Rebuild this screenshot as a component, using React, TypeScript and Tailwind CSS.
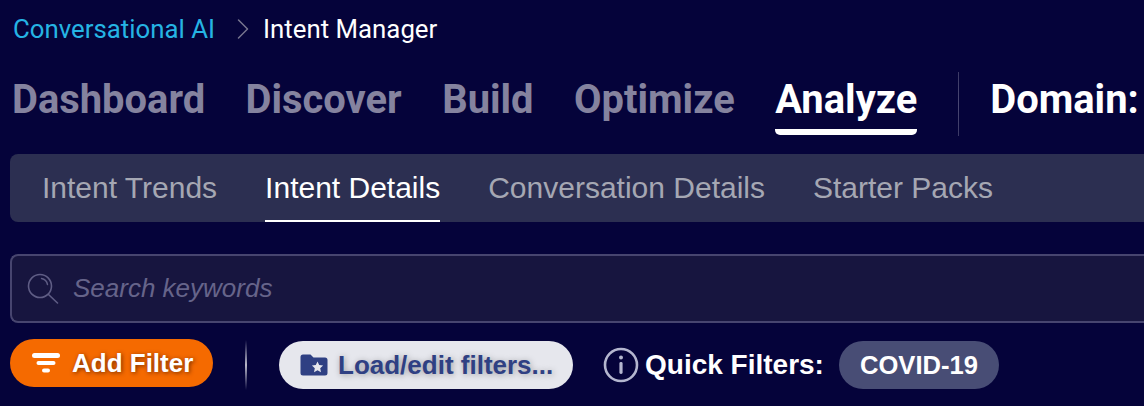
import React from 'react';
import { ChevronRight } from 'lucide-react';

const navItems = ['Dashboard', 'Discover', 'Build', 'Optimize'];
const tabs = ['Intent Trends', 'Intent Details', 'Conversation Details', 'Starter Packs'];

const FilterIcon = () => (
    <svg width="30" height="36" viewBox="0 0 30 36" className="shrink-0">
        <rect x="1" y="8" width="28" height="5" rx="2.5" fill="#fff" />
        <rect x="5.5" y="16" width="19" height="4" rx="2" fill="#fff" />
        <rect x="11" y="23.5" width="8" height="4" rx="2" fill="#fff" />
    </svg>
);

const FolderStarIcon = () => (
    <svg width="28" height="22" viewBox="0 0 28 22" className="shrink-0">
        <path d="M3 0.5h7.5l3 3H25a2.5 2.5 0 0 1 2.5 2.5v13a2.5 2.5 0 0 1-2.5 2.5H3A2.5 2.5 0 0 1 .5 19V3A2.5 2.5 0 0 1 3 .5z" fill="#2f4083" />
        <path d="M17.5 7.5l1.7 3.6 3.9.5-2.9 2.7.8 3.9-3.5-2-3.5 2 .8-3.9-2.9-2.7 3.9-.5z" fill="#e6e7ed" />
    </svg>
);

const SearchIcon = () => (
    <svg width="32" height="32" viewBox="0 0 32 32" fill="none" className="shrink-0 text-[#5f5d85]" stroke="currentColor">
        <circle cx="13" cy="13" r="11.5" strokeWidth="1.6" />
        <path d="M21.5 21.5L30.5 30" strokeWidth="1.6" strokeLinecap="round" />
        <path d="M14.5 5.5a7.5 7.5 0 0 1 6 6" strokeWidth="1.4" strokeLinecap="round" />
    </svg>
);

const InfoIcon = () => (
    <svg width="36" height="36" viewBox="0 0 36 36" fill="none" className="shrink-0">
        <circle cx="18" cy="18" r="16" stroke="#b4b6cf" strokeWidth="2.6" />
        <circle cx="18" cy="10.5" r="2" fill="#b4b6cf" />
        <rect x="16.4" y="15" width="3.2" height="12" rx="1.4" fill="#b4b6cf" />
    </svg>
);

export default function App() {
    return (
        <div className="h-[406px] w-[1144px] overflow-hidden bg-[#05033a] pl-[10px] font-['Liberation_Sans',sans-serif]">
            {/* breadcrumb */}
            <div className="flex h-[60px] items-center pb-[2px] pl-[3px] font-['Roboto',sans-serif] text-[25.8px]">
                <span className="text-[#25b4e4]">Conversational AI</span>
                <ChevronRight size={36} strokeWidth={1} className="ml-[10px] mr-[2px] text-[#77758f]" />
                <span className="text-white">Intent Manager</span>
            </div>

            {/* main nav */}
            <div className="flex h-[74px] items-start pl-[2px] font-['Roboto',sans-serif] text-[39.9px] font-bold whitespace-nowrap">
                <div className="flex gap-[40.5px]">
                    {navItems.map(item => (
                        <span key={item} className="h-[60px] leading-[80px] text-[#85839f]">{item}</span>
                    ))}
                    <span className="relative h-[75px] leading-[80px] text-white">
                        Analyze
                        <span className="absolute bottom-0 left-0 right-0 h-[6px] rounded-b-[5px] bg-white" />
                    </span>
                </div>
                <div className="ml-[41px] mt-[12px] h-[64px] w-px bg-gradient-to-b from-[#3c3a66] via-[#4a4874] to-[#3c3a66]" />
                <span className="ml-[31px] leading-[80px] text-white">Domain:</span>
            </div>

            {/* sub tabs */}
            <div className="mt-[20px] flex h-[68px] gap-[48px] rounded-l-[8px] bg-[#2c2f51] pl-[32px] text-[30px] whitespace-nowrap">
                {tabs.map((tab, i) => (
                    <div
                        key={tab}
                        className={i === 1
                            ? 'flex h-full items-center border-b-2 border-white text-white'
                            : 'flex h-full items-center pb-[2px] text-[#a5a7b3]'}
                    >
                        {tab}
                    </div>
                ))}
            </div>

            {/* search */}
            <div className="mt-[32px] flex h-[69px] items-center gap-[14px] rounded-l-[8px] border-2 border-r-0 border-[#47456f] bg-[#17153f] pl-[15px]">
                <SearchIcon />
                <span className="text-[26px] text-[#66648a] italic">Search keywords</span>
            </div>

            {/* filter row */}
            <div className="mt-[16px] flex items-start text-[26px] font-bold whitespace-nowrap">
                <button className="flex h-[48px] w-[203px] items-center gap-[11px] rounded-full bg-[#f56a00] pl-[21px] text-white [text-shadow:1px_1px_4px_rgba(90,30,0,0.8)]">
                    <FilterIcon />
                    Add Filter
                </button>
                <div className="ml-[32px] mt-[1px] h-[50px] w-[2px] bg-gradient-to-b from-transparent via-[#b9b8c9] to-transparent" />
                <button className="ml-[32px] mt-[2px] flex h-[48px] w-[294px] items-center gap-[10px] rounded-full bg-[#e6e7ed] pl-[21px] text-[#2f4083] [text-shadow:1px_1px_6px_rgba(0,0,0,0.35)]">
                    <FolderStarIcon />
                    Load/edit filters...
                </button>
                <div className="ml-[30px] mt-[2px] flex h-[48px] items-center gap-[6px] text-[28px] text-white">
                    <InfoIcon />
                    Quick Filters:
                </div>
                <div className="ml-[15px] mt-[2px] flex h-[48px] items-center rounded-full bg-[#484d75] px-[21px] text-[25.6px] text-white">COVID-19</div>
            </div>
        </div>
    );
}
